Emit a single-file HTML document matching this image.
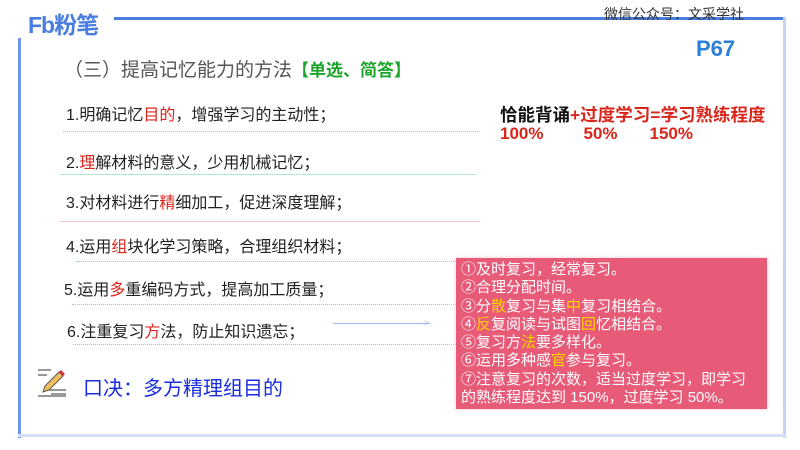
<!DOCTYPE html>
<html><head><meta charset="utf-8"><style>
body{margin:0;width:800px;height:450px;background:#fff;position:relative;overflow:hidden;font-family:"Liberation Sans","Noto Sans CJK SC",sans-serif}
.a{position:absolute;white-space:nowrap}
.it{font-size:16px;color:#222}
.r{color:#d9261c}
.ln{position:absolute;height:0;border-top:1px dotted #8fd6b8}
.y{color:#ffd200}
</style></head><body>
<div class="a" style="left:114px;top:17px;width:672px;height:3px;background:#4a7de0"></div>
<div class="a" style="left:783px;top:17px;width:3px;height:421px;background:#c4d3f6"></div>
<div class="a" style="left:18px;top:38px;width:3px;height:400px;background:#6f95ea"></div>
<div class="a" style="left:18px;top:434px;width:768px;height:3px;background:#d5e0f8"></div>
<div class="a" style="left:28px;top:6px;font-size:23px;font-weight:bold;color:#4a7de0;letter-spacing:-1px">Fb粉笔</div>
<div class="a" style="left:604px;top:4px;font-size:14px;color:#333">微信公众号：文采学社</div>
<div class="a" style="left:696px;top:36px;font-size:22px;font-weight:bold;color:#2a7fd8">P67</div>
<div class="a" style="left:64px;top:55px;font-size:19px;color:#555">（三）提高记忆能力的方法<span style="color:#1aa52a;font-weight:bold;font-size:17px">【单选、简答】</span></div>
<div class="a" style="left:500px;top:102px;font-size:17.5px;font-weight:bold;color:#111">恰能背诵<span class="r">+过度学习=学习熟练程度</span></div>
<div class="a r" style="left:500px;top:124px;font-size:17px;font-weight:bold">100%<span style="margin-left:40px">50%</span><span style="margin-left:32px">150%</span></div>
<div class="a it" style="left:66px;top:101px">1.明确记忆<span class="r">目的</span>，增强学习的主动性；</div>
<div class="ln" style="left:63px;top:131px;width:417px"></div>
<div class="a it" style="left:66px;top:149px">2.<span class="r">理</span>解材料的意义，少用机械记忆；</div>
<div class="ln" style="left:60px;top:174px;width:417px;border-top:1px solid #b8e3cf"></div>
<div class="a it" style="left:66px;top:189px">3.对材料进行<span class="r">精</span>细加工，促进深度理解；</div>
<div class="ln" style="left:60px;top:221px;width:420px;border-top:1px solid #f2c6cf"></div>
<div class="a it" style="left:66px;top:233px">4.运用<span class="r">组</span>块化学习策略，合理组织材料；</div>
<div class="ln" style="left:76px;top:261px;width:380px"></div>
<div class="a it" style="left:64px;top:276px">5.运用<span class="r">多</span>重编码方式，提高加工质量；</div>
<div class="ln" style="left:72px;top:304px;width:384px"></div>
<div class="a it" style="left:67px;top:318px">6.注重复习<span class="r">方</span>法，防止知识遗忘；</div>
<div class="a" style="left:333px;top:323px;width:97px;height:1px;background:#9dbaf0"></div>
<div class="a" style="left:424px;top:318px;font-size:9px;color:#9dbaf0">&gt;</div>
<div class="ln" style="left:73px;top:344px;width:383px"></div>
<svg class="a" style="left:37px;top:368px" width="30" height="30" viewBox="0 0 30 30"><g stroke="#777" stroke-width="1.5"><line x1="1" y1="2" x2="14" y2="2"/><line x1="1" y1="7" x2="10" y2="7"/><line x1="12" y1="22" x2="29" y2="22"/><line x1="14" y1="26" x2="29" y2="26"/><line x1="1" y1="28" x2="29" y2="28"/></g><path d="M6 24 L8 18 L22 4 L26 8 L12 22 Z" fill="#f0c060" stroke="#555" stroke-width="1"/><path d="M22 4 L24 2 L28 6 L26 8Z" fill="#d9303a"/></svg>
<div class="a" style="left:83px;top:372px;font-size:20px;color:#1a2ee0">口决：多方精理组目的</div>
<div class="a" style="left:456px;top:258px;width:311px;height:151px;background:#e85b78;box-shadow:0 0 4px #f5c8d2"></div>
<div class="a" style="left:461px;top:261px;font-size:15px;line-height:18.3px;color:#fff">①及时复习，经常复习。<br>②合理分配时间。<br>③分<span class="y">散</span>复习与集<span class="y">中</span>复习相结合。<br>④<span class="y">反</span>复阅读与试图<span class="y">回</span>忆相结合。<br>⑤复习方<span class="y">法</span>要多样化。<br>⑥运用多种感<span class="y">官</span>参与复习。<br>⑦注意复习的次数，适当过度学习，即学习<br>的熟练程度达到 150%，过度学习 50%。</div>
</body></html>
